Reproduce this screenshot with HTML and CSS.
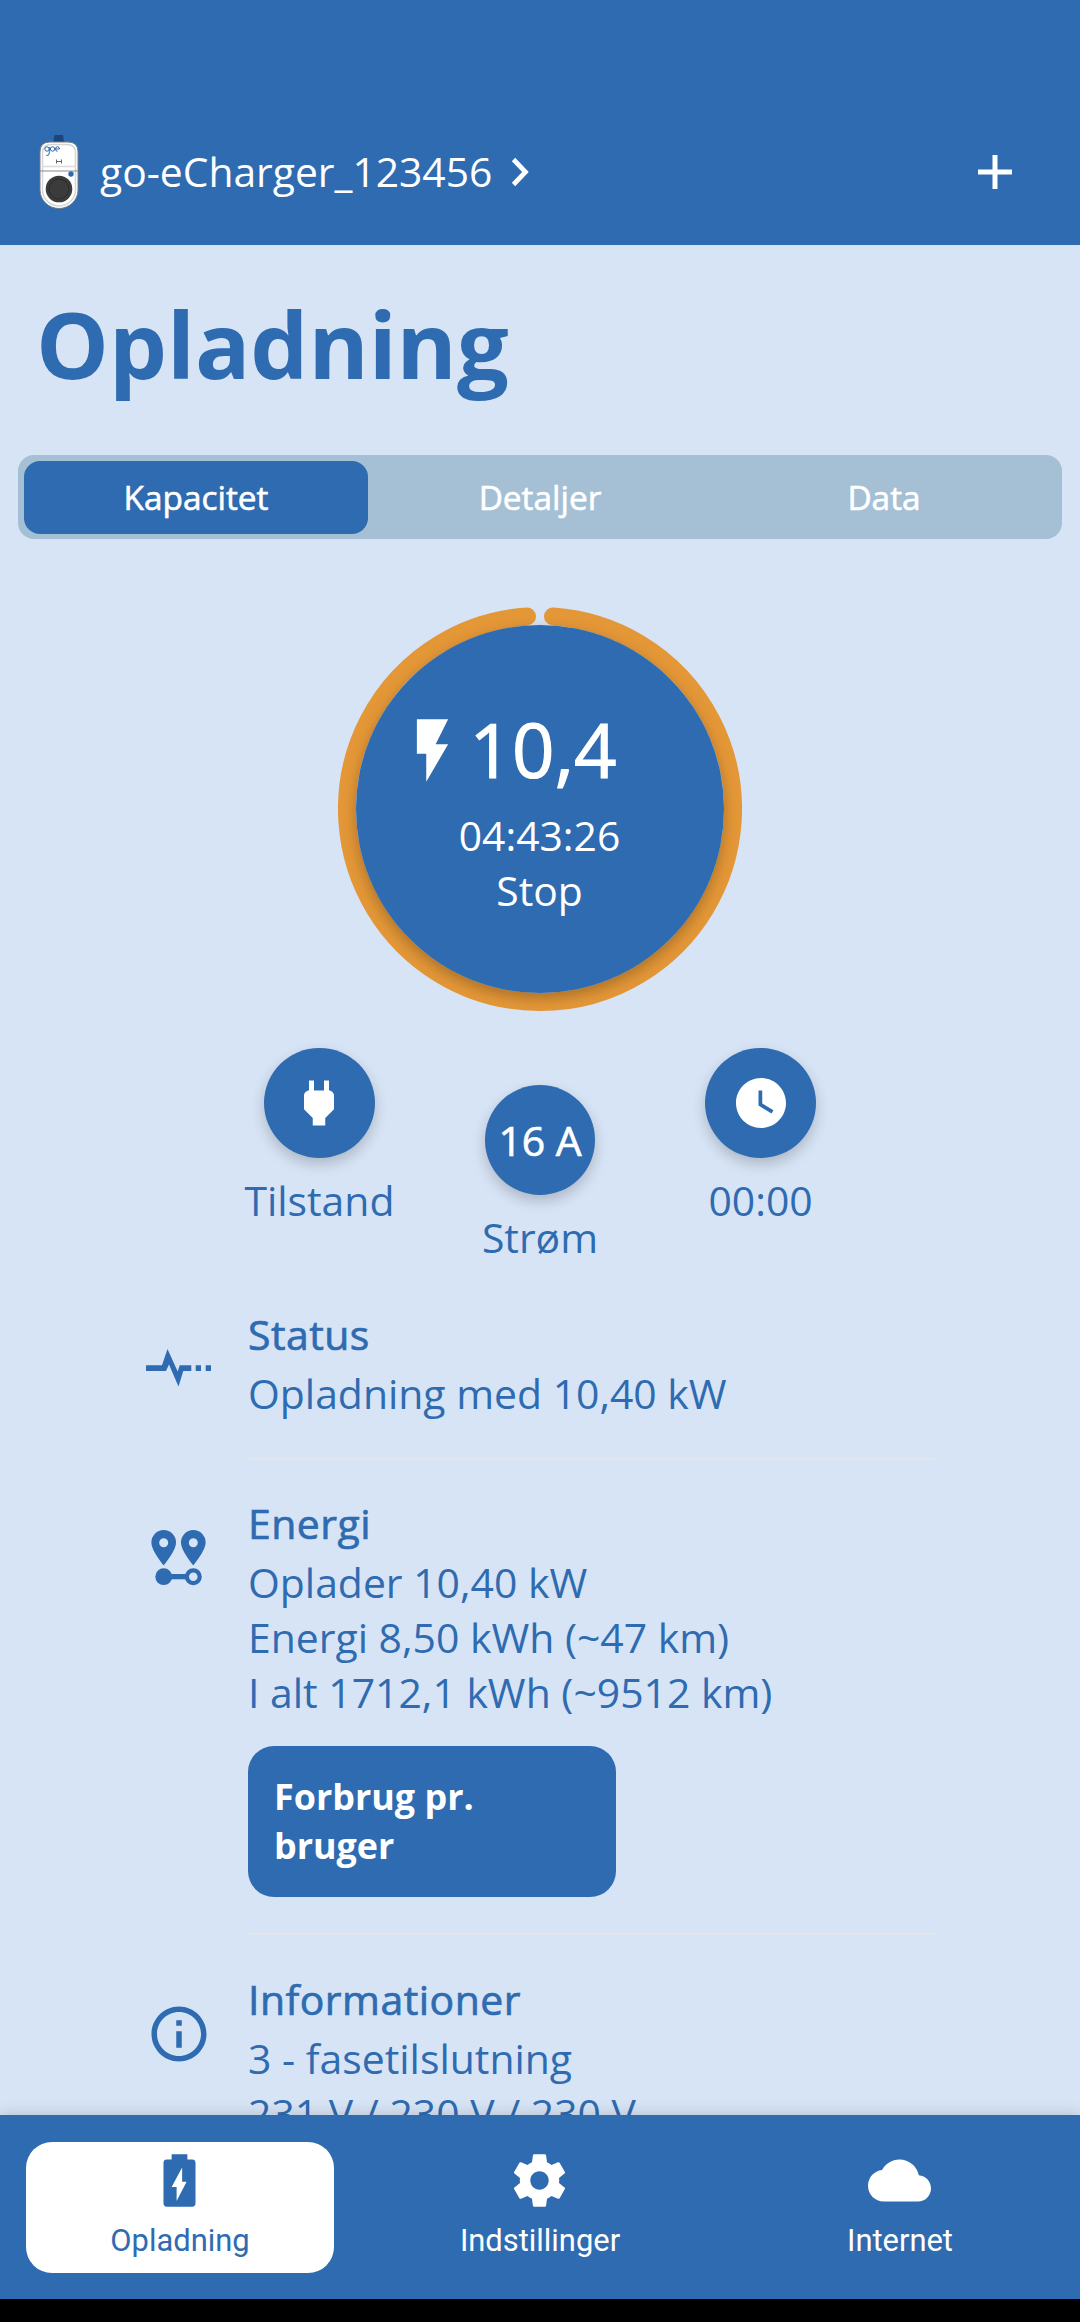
FILE: index.html
```html
<!DOCTYPE html>
<html lang="da">
<head>
<meta charset="utf-8">
<title>go-eCharger</title>
<link rel="stylesheet" href="styles.css">
</head>
<body>
<div class="app">
  <header class="topbar">
    <svg class="device" viewBox="0 0 44 76">
      <path d="M17.500 0h8.500l1.500 10H16z" fill="#1d4479"/>
      <path d="M13 7h18q10 0 10 10v38a19 18.500 0 0 1-38 0V17Q3 7 13 7z" fill="#fff" stroke="#777b80" stroke-width="1"/>
      <path d="M14 9.500h16q8.500 0 8.500 8.500v37a16.500 16 0 0 1-33 0V18q0-8.500 8.500-8.500z" fill="none" stroke="#d5d5d5" stroke-width="1.500"/>
      <path d="M5 31.500h34" stroke="#dcdcdc" stroke-width="1.500"/>
      <path d="M3 36h38" stroke="#8b8b8b" stroke-width="1"/>
      <path d="M19.500 24.500v4M24.500 24.500v4M19.500 26.500h5" stroke="#666" stroke-width="1" fill="none"/>
      <g fill="none" stroke="#2e6bb1" stroke-width="1"><circle cx="10" cy="14" r="2.200"/><path d="M12.300 12v6q0 3-3 2.500"/><circle cx="15.500" cy="14" r="2.200"/><path d="M18.500 14h4q0-2.300-2-2.300t-2 2.300 2 2.300"/></g>
      <circle cx="34" cy="39" r="2.700" fill="#2e6bb1"/>
      <circle cx="22" cy="54" r="13.300" fill="#3b3b3b"/>
      <circle cx="22" cy="54" r="10" fill="none" stroke="#2b2b2b" stroke-width="1"/>
    </svg>
    <span class="device-name">go-eCharger_123456</span>
    <svg class="chevron" viewBox="0 0 18 30"><path d="M2.500 2.500L14.500 15 2.500 27.500" fill="none" stroke="#fff" stroke-width="4.700"/></svg>
    <svg class="plus" viewBox="0 0 34 34"><path d="M17 0v34M0 17h34" stroke="#fff" stroke-width="5"/></svg>
  </header>

  <main class="content">
    <h1 class="title">Opladning</h1>
    <nav class="tabs">
      <span class="tab tab-active">Kapacitet</span>
      <span class="tab">Detaljer</span>
      <span class="tab">Data</span>
    </nav>

    <section class="dial">
      <svg class="ring" viewBox="0 0 404 404"><path d="M215 9.440A193 193 0 1 1 189 9.440" fill="none" stroke="#e49737" stroke-width="18" stroke-linecap="round"/></svg>
      <div class="dial-face">
        <div class="power">
          <svg class="bolt" viewBox="0 0 24 24"><path d="M7 2v11h3v9l7-12h-4l4-8z" fill="#fff"/></svg>
          <span class="power-value">10,4</span>
        </div>
        <span class="dial-line">04:43:26</span>
        <span class="dial-line">Stop</span>
      </div>
    </section>

    <section class="actions">
      <div class="action">
        <span class="round"><svg viewBox="0 0 24 24"><path fill="#fff" d="M16.010 7L16 3h-2v4h-4V3H8v4h-.01C7 6.990 6 7.990 6 8.990v5.490L9.500 18v3h5v-3l3.500-3.510v-5.500c0-1-1-2-1.990-1.990z"/></svg></span>
        <span>Tilstand</span>
      </div>
      <div class="action action-low">
        <span class="round">16 A</span>
        <span>Strøm</span>
      </div>
      <div class="action">
        <span class="round"><svg viewBox="0 0 24 24"><path fill="#fff" d="M12 2C6.500 2 2 6.500 2 12s4.500 10 10 10 10-4.500 10-10S17.500 2 12 2zm4.200 14.200L11 13V7h1.500v5.200l4.500 2.700-.8 1.300z"/></svg></span>
        <span>00:00</span>
      </div>
    </section>

    <section class="list">
      <article class="item">
        <div class="item-icon"><svg class="pulse" width="66" height="42" viewBox="0 0 66 42"><path d="M0 16.300H16L21.500 0 31.700 22.500 33.700 16.300H45.300V22H37.300L32.500 37.500 23 15.500 20 22H0zM49.700 16.300H55V22H49.700zM59.700 16.300H65V22H59.700z" fill="#2e6bb1"/></svg></div>
        <div class="item-body">
          <h2>Status</h2>
          <p>Opladning med 10,40 kW</p>
        </div>
      </article>
      <article class="item">
        <div class="item-icon"><svg class="raised" width="56" height="56" viewBox="0 0 56 56"><g fill="#2e6bb1"><path fill-rule="evenodd" d="M12.700 0a12.300 12.300 0 0 1 12.300 12.500C25 21 12.700 35.300 12.700 35.300S.4 21 .4 12.500A12.300 12.300 0 0 1 12.700 0zm0 8.200a4.500 4.500 0 1 0 0 9 4.500 4.500 0 0 0 0-9z"/><path fill-rule="evenodd" d="M42.300 0a12.300 12.300 0 0 1 12.300 12.500C54.600 21 42.300 35.300 42.300 35.300S30 21 30 12.500A12.300 12.300 0 0 1 42.300 0zm0 8.200a4.500 4.500 0 1 0 0 9 4.500 4.500 0 0 0 0-9z"/><circle cx="12.700" cy="46.700" r="8.400"/><path d="M13 44h23.500v5.300H13z"/></g><circle cx="42.300" cy="46.700" r="6.400" fill="none" stroke="#2e6bb1" stroke-width="4.200"/></svg></div>
        <div class="item-body">
          <h2>Energi</h2>
          <p>Oplader 10,40 kW</p>
          <p>Energi 8,50 kWh (~47 km)</p>
          <p>I alt 1712,1 kWh (~9512 km)</p>
          <button class="usage">Forbrug pr. bruger</button>
        </div>
      </article>
      <article class="item">
        <div class="item-icon"><svg class="raised" width="66" height="66" viewBox="0 0 24 24"><path fill="#2e6bb1" d="M11 7h2v2h-2zm0 4h2v6h-2zm1-9C6.480 2 2 6.480 2 12s4.480 10 10 10 10-4.480 10-10S17.520 2 12 2zm0 18c-4.410 0-8-3.590-8-8s3.590-8 8-8 8 3.590 8 8-3.590 8-8 8z"/></svg></div>
        <div class="item-body">
          <h2>Informationer</h2>
          <p>3 - fasetilslutning</p>
          <p>231 V / 230 V / 230 V</p>
        </div>
      </article>
    </section>
  </main>

  <nav class="bottombar">
    <div class="nav-item nav-active">
      <svg viewBox="0 0 24 24"><path fill="#2e6bb1" fill-rule="evenodd" d="M9 2h6v2h1.800q1.300 0 1.300 1.300v15.400q0 1.300-1.300 1.300H7.200q-1.300 0-1.300-1.300V5.300Q5.900 4 7.200 4H9zM13 7L9 14.500h1.900V19.800L14.700 12.500H13z"/></svg>
      <span>Opladning</span>
    </div>
    <div class="nav-item">
      <svg viewBox="0 0 24 24"><path fill="#fff" d="M19.430 12.980c.04-.32.070-.64.070-.98s-.03-.66-.07-.98l2.110-1.650c.19-.15.240-.42.120-.64l-2-3.460c-.12-.22-.39-.3-.61-.22l-2.490 1c-.52-.4-1.080-.73-1.690-.98l-.38-2.650C14.460 2.180 14.250 2 14 2h-4c-.25 0-.46.180-.49.420l-.38 2.650c-.61.250-1.170.590-1.690.980l-2.490-1c-.23-.09-.49 0-.61.220l-2 3.460c-.13.220-.07.490.12.640l2.110 1.650c-.04.320-.07.650-.07.980s.03.660.07.980l-2.110 1.650c-.19.150-.24.420-.12.640l2 3.460c.12.220.39.300.61.220l2.490-1c.52.400 1.080.730 1.690.980l.38 2.650c.03.240.24.420.49.420h4c.25 0 .46-.18.490-.42l.38-2.650c.61-.25 1.170-.59 1.690-.98l2.490 1c.23.090.49 0 .61-.22l2-3.460c.12-.22.070-.49-.12-.64l-2.110-1.650zM12 15.500c-1.930 0-3.500-1.570-3.500-3.500s1.570-3.500 3.500-3.500 3.500 1.570 3.500 3.500-1.570 3.500-3.500 3.500z"/></svg>
      <span>Indstillinger</span>
    </div>
    <div class="nav-item">
      <svg viewBox="0 0 24 24"><path fill="#fff" d="M19.350 10.040C18.670 6.590 15.640 4 12 4 9.110 4 6.600 5.640 5.350 8.040 2.340 8.360 0 10.910 0 14c0 3.310 2.690 6 6 6h13c2.760 0 5-2.240 5-5 0-2.640-2.050-4.780-4.650-4.960z"/></svg>
      <span>Internet</span>
    </div>
  </nav>
  <div class="system-bar"></div>
</div>
</body>
</html>
```
FILE: styles.css
```css
* { box-sizing: border-box; }

body {
  margin: 0;
  background: #d7e4f5;
  font-family: "Open Sans", sans-serif;
  color: #2e6bb1;
}

h1, h2, p { margin: 0; }

.app {
  display: flex;
  flex-direction: column;
  width: 1080px;
  height: 2322px;
  overflow: hidden;
}

.topbar {
  flex: none;
  display: flex;
  align-items: center;
  height: 245px;
  padding: 99px 68px 0 37px;
  background: #2e6bb1;
  color: #fff;
}

.device { width: 44px; height: 76px; margin-top: 1px; }
.device-name { margin: -2px 0 0 19px; font-size: 40.800px; line-height: 55px; }
.chevron { width: 18px; height: 30px; margin-left: 19px; }
.plus { width: 34px; height: 34px; margin-left: auto; }

.content {
  flex: 1;
  min-height: 0;
  overflow: hidden;
}

.title {
  margin: 36px 0 0 36px;
  font-size: 91.700px;
  line-height: 125px;
  font-weight: 700;
}

.tabs {
  display: flex;
  height: 84px;
  margin: 49px 18px 0;
  padding: 6px;
  border-radius: 16px;
  background: #a5bfd4;
}

.tab {
  flex: 1;
  height: 73px;
  border-radius: 16px;
  color: #fff;
  font-size: 33.400px;
  line-height: 72px;
  text-align: center;
  -webkit-text-stroke: .6px currentColor;
}

.tab-active { background: #2e6bb1; }

.dial {
  display: grid;
  place-items: center;
  width: 404px;
  height: 404px;
  margin: 68px auto 0;
}

.ring, .dial-face { grid-area: 1 / 1; }
.ring { width: 404px; height: 404px; }

.dial-face {
  display: flex;
  flex-direction: column;
  align-items: center;
  width: 368px;
  height: 368px;
  padding-top: 70px;
  border-radius: 50%;
  background: #2e6bb1;
  box-shadow: 0 5px 14px rgba(0, 0, 0, .26);
  color: #fff;
}

.power {
  display: flex;
  align-items: center;
  height: 110px;
  margin: 0 69px 3px 0;
}

.bolt { width: 75px; height: 75px; }

.power-value {
  margin-top: -3px;
  font-size: 74.400px;
  -webkit-text-stroke: 1.200px currentColor;
}

.dial-line { margin-right: 1px; font-size: 40.850px; line-height: 55px; }

.actions {
  display: flex;
  justify-content: center;
  height: 220px;
  margin-top: 37px;
  font-size: 40.900px;
  line-height: 55px;
}

.action {
  display: flex;
  flex-direction: column;
  align-items: center;
  gap: 15px;
  width: 220.600px;
}

.action-low { padding-top: 37px; }

.round {
  display: grid;
  place-items: center;
  width: 110.500px;
  height: 110px;
  border-radius: 50%;
  background: #2e6bb1;
  box-shadow: 0 6px 14px rgba(0, 0, 0, .2);
  color: #fff;
  -webkit-text-stroke: .7px currentColor;
}

.round svg { width: 60px; height: 60px; }

.list { padding: 39px 145px 0 139px; }

.item { display: flex; }

.item-icon {
  display: grid;
  place-items: center;
  flex: none;
  width: 80px;
  height: 66px;
  margin: 31px 29px 0 0;
}

.pulse { margin-top: -2px; }
.raised { margin-top: -3px; }

.item-body {
  flex: 1;
  margin-bottom: 35.500px;
  padding-bottom: 37px;
  border-bottom: 2px solid #e2e6ea;
  font-size: 40.900px;
  line-height: 55px;
}

.item:nth-child(2) .item-body { margin-bottom: 37px; padding-bottom: 38px; }

.item-body h2 {
  margin-bottom: 4px;
  font-size: 40.900px;
  font-weight: 400;
  letter-spacing: .5px;
  -webkit-text-stroke: .7px currentColor;
}

.usage {
  display: block;
  width: 368px;
  height: 151px;
  margin: 26px 0 -2px;
  padding: 0 90px 0 26px;
  border: 0;
  border-radius: 26px;
  background: #2e6bb1;
  color: #fff;
  font: 700 35.900px/49px "Open Sans", sans-serif;
  text-align: left;
}

.bottombar {
  position: relative;
  flex: none;
  display: grid;
  grid-template-columns: repeat(3, 1fr);
  height: 184px;
  padding: 27px 0 0;
  background: #2e6bb1;
  box-shadow: 0 0 14px rgba(0, 0, 0, .18);
  color: #fff;
  font-family: Roboto, sans-serif;
  font-size: 30.900px;
}

.nav-item {
  display: flex;
  flex-direction: column;
  align-items: center;
  height: 131px;
  margin: 0 26px;
  padding-top: 7px;
  border-radius: 26px;
  line-height: 36px;
}

.nav-item svg { width: 63px; height: 63px; margin: 0 1px 11px 0; }
.nav-active { background: #fff; color: #2e6bb1; }
.system-bar { flex: none; height: 23px; background: #000; }
```
